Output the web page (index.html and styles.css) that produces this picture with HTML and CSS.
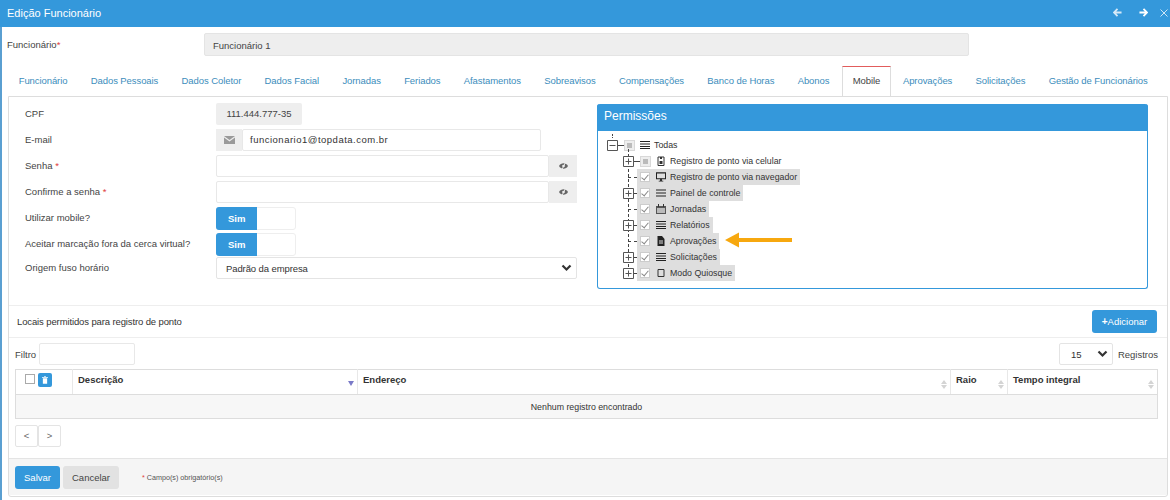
FILE: index.html
```html
<!DOCTYPE html>
<html lang="pt-BR">
<head>
  <meta charset="UTF-8">
  <title>Edição Funcionário</title>
  <link rel="stylesheet" href="styles.css">
</head>
<body>
  <div class="window">
    <header class="title-bar">
      <h1>Edição Funcionário</h1>
      <div class="title-actions">
        <svg width="9" height="9" viewBox="0 0 10 10"><path d="M5 1 1 5l4 4M1.500 5H9.500" fill="none" stroke="#d6e9f7" stroke-width="2"/></svg>
        <svg class="next" width="9" height="9" viewBox="0 0 10 10"><path d="M5 1l4 4-4 4M8.500 5H.5" fill="none" stroke="#fff" stroke-width="2"/></svg>
        <svg class="close" width="8" height="8" viewBox="0 0 8 8"><path d="M.5.5l7 7M7.500.5l-7 7" fill="none" stroke="#cfe6f6" stroke-width="1"/></svg>
      </div>
    </header>

    <div class="employee-row">
      <label>Funcionário<span class="req">*</span></label>
      <div class="employee-field">Funcionário 1</div>
    </div>

    <nav class="tabs">
      <a>Funcionário</a>
      <a>Dados Pessoais</a>
      <a>Dados Coletor</a>
      <a>Dados Facial</a>
      <a>Jornadas</a>
      <a>Feriados</a>
      <a>Afastamentos</a>
      <a>Sobreavisos</a>
      <a>Compensações</a>
      <a>Banco de Horas</a>
      <a>Abonos</a>
      <a class="active">Mobile</a>
      <a>Aprovações</a>
      <a>Solicitações</a>
      <a>Gestão de Funcionários</a>
    </nav>

    <section class="tab-panel">
      <div class="columns">
        <div class="form">
          <div class="form-row">
            <label>CPF</label>
            <div class="readonly">111.444.777-35</div>
          </div>
          <div class="form-row">
            <label>E-mail</label>
            <div class="group email">
              <span class="addon">
                <svg width="11" height="8" viewBox="0 0 11 8"><path d="M0 0h11L5.500 4zM0 1.500v6.500h11V1.500L5.500 5.500z" fill="#9a9a9a"/></svg>
              </span>
              <div class="input">funcionario1@topdata.com.br</div>
            </div>
          </div>
          <div class="form-row">
            <label>Senha <span class="req">*</span></label>
            <div class="group wide">
              <div class="input"></div>
              <span class="addon">
                <svg width="9" height="8" viewBox="0 0 10 8"><path d="M0 4c2-4 8-4 10 0-2 4-8 4-10 0z" fill="#666"/><circle cx="5" cy="4" r="1.500" fill="#eee"/><path d="M7 .5 3.500 7.500" stroke="#eee"/></svg>
              </span>
            </div>
          </div>
          <div class="form-row">
            <label>Confirme a senha <span class="req">*</span></label>
            <div class="group wide">
              <div class="input"></div>
              <span class="addon">
                <svg width="9" height="8" viewBox="0 0 10 8"><path d="M0 4c2-4 8-4 10 0-2 4-8 4-10 0z" fill="#666"/><circle cx="5" cy="4" r="1.500" fill="#eee"/><path d="M7 .5 3.500 7.500" stroke="#eee"/></svg>
              </span>
            </div>
          </div>
          <div class="form-row">
            <label>Utilizar mobile?</label>
            <div class="switch"><span>Sim</span></div>
          </div>
          <div class="form-row">
            <label>Aceitar marcação fora da cerca virtual?</label>
            <div class="switch"><span>Sim</span></div>
          </div>
          <div class="form-row origin">
            <label>Origem fuso horário</label>
            <div class="select wide-select">
              Padrão da empresa
              <svg width="11" height="8" viewBox="0 0 11 8"><path d="M1.500 1.500 5.500 5.500l4-4" fill="none" stroke="#333" stroke-width="2.200"/></svg>
            </div>
          </div>
        </div>

        <div class="perm-panel">
          <div class="perm-title">Permissões</div>
          <div class="tree">
            <div class="tree-root">
              <svg class="toggle" width="11" height="11" viewBox="0 0 11 11"><path d="M.5.5h10v10H.5zM2.500 5.500h6" fill="#fff" stroke="#555"/></svg>
              <span class="dash"></span>
              <span class="check partial"></span>
              <svg class="ico" width="10" height="8" viewBox="0 0 10 8"><path d="M0 .5h10M0 3h10M0 5.500h10M0 7.500h10" stroke="#222" stroke-width="1.200"/></svg>
              <span class="node">Todas</span>
            </div>
            <div class="tree-children">
              <div class="tree-row">
                <svg class="toggle" width="11" height="11" viewBox="0 0 11 11"><path d="M.5.5h10v10H.5zM2.500 5.500h6M5.500 2.500v6" fill="#fff" stroke="#555"/></svg>
                <span class="dash"></span>
                <span class="check partial"></span>
                <svg class="ico" width="10" height="10" viewBox="0 0 10 10"><path d="M2 1h6v8.500H2z" fill="none" stroke="#333"/><path d="M3.500 5h3v3h-3z" fill="#333"/><path d="M4 1h2v2H4z" fill="#333"/></svg>
                <span class="node">Registro de ponto via celular</span>
              </div>
              <div class="tree-row">
                <span class="dash long"></span>
                <span class="selected">
                  <span class="check on"></span>
                  <svg class="ico" width="10" height="10" viewBox="0 0 11 10"><path d="M.5.5h10v6.500H.5z" fill="none" stroke="#222" stroke-width="1.200"/><path d="M3 9h5v1H3zM4.500 7h2v2h-2z" fill="#222"/></svg>
                  <span class="node">Registro de ponto via navegador</span>
                </span>
              </div>
              <div class="tree-row">
                <svg class="toggle" width="11" height="11" viewBox="0 0 11 11"><path d="M.5.5h10v10H.5zM2.500 5.500h6M5.500 2.500v6" fill="#fff" stroke="#555"/></svg>
                <span class="dash short"></span>
                <span class="selected">
                  <span class="check on"></span>
                  <svg class="ico" width="10" height="8" viewBox="0 0 10 8"><path d="M0 1h10M0 4h10M0 7h10" stroke="#222" stroke-width="1.100"/></svg>
                  <span class="node">Painel de controle</span>
                </span>
              </div>
              <div class="tree-row">
                <span class="dash long"></span>
                <span class="selected">
                  <span class="check on"></span>
                  <svg class="ico" width="10" height="10" viewBox="0 0 10 10"><path d="M0 2h10v8H0z" fill="#555"/><path d="M2 0h1v3H2zM7 0h1v3H7z" fill="#333"/><path d="M1 4h8v5H1z" fill="#bbb"/></svg>
                  <span class="node">Jornadas</span>
                </span>
              </div>
              <div class="tree-row">
                <svg class="toggle" width="11" height="11" viewBox="0 0 11 11"><path d="M.5.5h10v10H.5zM2.500 5.500h6M5.500 2.500v6" fill="#fff" stroke="#555"/></svg>
                <span class="dash short"></span>
                <span class="selected">
                  <span class="check on"></span>
                  <svg class="ico" width="10" height="8" viewBox="0 0 10 8"><path d="M0 .5h10M0 3h10M0 5.500h10M0 7.500h10" stroke="#222" stroke-width="1.200"/></svg>
                  <span class="node">Relatórios</span>
                </span>
              </div>
              <div class="tree-row">
                <span class="dash long"></span>
                <span class="selected">
                  <span class="check on"></span>
                  <svg class="ico" width="10" height="10" viewBox="0 0 10 10"><path d="M1.500 0H6l2.500 3v7h-7z" fill="#222"/><path d="M3 5h4M3 7h4" stroke="#ddd"/></svg>
                  <span class="node">Aprovações</span>
                </span>
              </div>
              <div class="tree-row">
                <svg class="toggle" width="11" height="11" viewBox="0 0 11 11"><path d="M.5.5h10v10H.5zM2.500 5.500h6M5.500 2.500v6" fill="#fff" stroke="#555"/></svg>
                <span class="dash short"></span>
                <span class="selected">
                  <span class="check on"></span>
                  <svg class="ico" width="10" height="8" viewBox="0 0 10 8"><path d="M0 .5h10M0 3h10M0 5.500h10M0 7.500h10" stroke="#222" stroke-width="1.200"/></svg>
                  <span class="node">Solicitações</span>
                </span>
              </div>
              <div class="tree-row">
                <svg class="toggle" width="11" height="11" viewBox="0 0 11 11"><path d="M.5.5h10v10H.5zM2.500 5.500h6M5.500 2.500v6" fill="#fff" stroke="#555"/></svg>
                <span class="dash short"></span>
                <span class="selected">
                  <span class="check on"></span>
                  <svg class="ico" width="10" height="10" viewBox="0 0 10 10"><path d="M2 1.500h6v7H2z" fill="none" stroke="#333"/></svg>
                  <span class="node">Modo Quiosque</span>
                </span>
              </div>
            </div>
            <svg class="arrow" width="68" height="16" viewBox="0 0 68 16"><path d="M0 8 14 0.500v5.500h53v4H14v5.500z" fill="#f7a80f"/></svg>
          </div>
        </div>
      </div>

      <div class="places-head">
        <span>Locais permitidos para registro de ponto</span>
        <button class="btn primary add"><b>+</b>Adicionar</button>
      </div>

      <div class="list-tools">
        <div class="filter">Filtro <div class="input filter-input"></div></div>
        <div class="page-size">
          <div class="select size-select">
            15
            <svg width="11" height="8" viewBox="0 0 11 8"><path d="M1.500 1.500 5.500 5.500l4-4" fill="none" stroke="#333" stroke-width="2.200"/></svg>
          </div>
          Registros
        </div>
      </div>

      <table class="grid">
        <thead>
          <tr>
            <th class="col-check">
              <span class="check-box"></span>
              <span class="trash">
                <svg width="6" height="8" viewBox="0 0 7 9"><path d="M0 1h7v1H0zM2.500 0h2v1h-2zM1 2.500h5V9H1z" fill="#fff"/></svg>
              </span>
            </th>
            <th class="col-desc">Descrição<i class="sort-down"></i></th>
            <th class="col-addr">Endereço<i class="sort"></i></th>
            <th class="col-radius">Raio<i class="sort"></i></th>
            <th class="col-full">Tempo integral<i class="sort"></i></th>
          </tr>
        </thead>
        <tbody>
          <tr><td colspan="5">Nenhum registro encontrado</td></tr>
        </tbody>
      </table>

      <div class="pager"><span>&lt;</span><span>&gt;</span></div>

      <footer class="actions">
        <button class="btn primary save">Salvar</button>
        <button class="btn cancel">Cancelar</button>
        <span class="note"><span class="req">*</span> Campo(s) obrigatório(s)</span>
      </footer>
    </section>
  </div>
</body>
</html>
```

FILE: styles.css
```css
* {
  box-sizing: border-box;
}
html,
body {
  margin: 0;
  height: 100%;
  background: #fff;
}
body {
  font-family: "Liberation Sans", Arial, sans-serif;
  font-size: 9.5px;
  color: #444;
  overflow: hidden;
}

.window {
  height: 500px;
  border-left: 2px solid #5a9fd1;
}
.req {
  color: #e04040;
}

/* title */
.title-bar {
  height: 27px;
  margin-left: -2px;
  padding: 0 2px 2px 7px;
  background: #3498db;
  display: flex;
  align-items: center;
  justify-content: space-between;
}
.title-bar h1 {
  margin: 0;
  font-size: 11px;
  font-weight: normal;
  color: #fff;
}
.title-actions {
  display: flex;
  align-items: center;
}
.title-actions .next {
  margin-left: 17px;
}
.title-actions .close {
  margin-left: 12px;
}

.employee-row {
  height: 30px;
  padding: 6px 201px 0 5px;
  display: flex;
  align-items: flex-start;
}
.employee-row label {
  width: 197px;
  line-height: 23px;
}
.employee-field {
  flex: 1;
  height: 23px;
  line-height: 23px;
  padding-left: 8px;
  background: #eee;
  border: 1px solid #e4e4e4;
  border-radius: 2px;
}

/* tabs */
.tabs {
  height: 39px;
  padding: 9px 0 0 5px;
  display: flex;
}
.tabs a {
  padding: 0 11px;
  margin: 0 .67px;
  line-height: 29px;
  color: #3c8dbc;
  white-space: nowrap;
  letter-spacing: -.08px;
}
.tabs .active {
  height: 30px;
  color: #444;
  background: #fff;
  border: 1px solid #ddd;
  border-top: 1px solid #e25c5c;
  border-bottom: 0;
  line-height: 28px;
  position: relative;
  z-index: 1;
  padding: 0 10px;
  margin-right: 0;
}

.tab-panel {
  margin: 0 2px 0 6px;
  height: 401px;
  border: 1px solid #ddd;
  border-radius: 0 0 3px 3px;
}
.columns {
  height: 209px;
  display: flex;
  border-bottom: 1px solid #eee;
}

/* left form */
.form {
  width: 588px;
  padding: 6px 0 0 16px;
}
.form-row {
  height: 26px;
  display: flex;
  align-items: flex-start;
}
.form-row.origin {
  height: 22px;
  margin-top: -2px;
}
.form-row label {
  width: 191px;
  line-height: 22px;
}
.readonly {
  width: 86px;
  height: 22px;
  line-height: 22px;
  text-align: center;
  background: #eee;
  border-radius: 2px;
}
.group {
  display: flex;
  height: 22px;
}
.email {
  width: 325px;
}
.wide {
  width: 361px;
}
.addon {
  width: 28px;
  flex: none;
  background: #eee;
  display: flex;
  align-items: center;
  justify-content: center;
}
.email .addon {
  width: 26px;
}
.input {
  flex: 1;
  height: 22px;
  line-height: 20px;
  padding-left: 7px;
  color: #333;
  background: #fff;
  border: 1px solid #e8e8e8;
  border-radius: 2px;
}
.email .input {
  letter-spacing: .5px;
}
.switch {
  width: 80px;
  height: 23px;
  border: 1px solid #eee;
  border-radius: 3px;
}
.switch span {
  display: block;
  width: 41px;
  height: 23px;
  margin: -1px 0 0 -1px;
  line-height: 23px;
  padding-left: 12px;
  font-weight: bold;
  color: #fff;
  background: #3498db;
  border-radius: 3px 0 0 3px;
}
.select {
  height: 22px;
  display: flex;
  align-items: center;
  justify-content: space-between;
  padding: 0 4px 0 9px;
  color: #333;
  background: #fff;
  border: 1px solid #e4e4e4;
  border-radius: 2px;
}
.wide-select {
  width: 361px;
  letter-spacing: -.1px;
}

/* permissions */
.perm-panel {
  width: 551px;
  height: 185px;
  margin-top: 7px;
  border: 1px solid #3498db;
  border-top: 0;
  border-radius: 3px;
}
.perm-title {
  height: 27px;
  margin: 0 -1px;
  padding-left: 7px;
  line-height: 25px;
  font-size: 12px;
  color: #fff;
  background: #3498db;
  border-radius: 3px 3px 0 0;
}
.tree {
  position: relative;
  padding: 6px 0 0 9px;
  color: #333;
  font-size: 8.800px;
}
.tree-root,
.tree-row {
  height: 16px;
  display: flex;
  align-items: center;
}
.tree-root::before {
  content: "";
  position: absolute;
  left: 14px;
  top: 3px;
  height: 4px;
  border-left: 1px dotted #444;
}
.tree-children {
  position: relative;
  padding-left: 16px;
}
.tree-children::before {
  content: "";
  position: absolute;
  left: 21px;
  top: -4px;
  height: 118px;
  border-left: 1px dashed #444;
}
.toggle {
  flex: none;
  position: relative;
}
.dash {
  width: 6px;
  flex: none;
  border-top: 1px dashed #444;
}
.dash.short {
  width: 3px;
}
.dash.long {
  width: 9px;
  margin-left: 5px;
}
.check {
  width: 10px;
  height: 10px;
  flex: none;
  display: inline-block;
  background: #fff;
  border: 1px solid #ddd;
}
.check.partial {
  width: 11px;
  height: 11px;
  background: #bbb;
  border-color: #d8d8d8;
  box-shadow: inset 0 0 0 2px #eee;
  margin-right: -1px;
}
.check.on {
  position: relative;
  border-color: #ccc;
}
.check.on::after {
  content: "";
  position: absolute;
  left: 2px;
  top: 0;
  width: 3px;
  height: 6px;
  border: solid #888;
  border-width: 0 1px 1px 0;
  transform: rotate(40deg);
}
.tree .ico {
  flex: none;
  margin: 0 4px 0 6px;
}
.selected {
  height: 16px;
  display: flex;
  align-items: center;
  padding: 0 3px;
  background: #dedede;
}
.arrow {
  position: absolute;
  left: 127px;
  top: 101px;
}

/* places */
.places-head {
  height: 32px;
  display: flex;
  align-items: center;
  justify-content: space-between;
  padding: 0 10px 0 8px;
  border-bottom: 1px solid #eee;
  color: #333;
  letter-spacing: -.12px;
}
.btn {
  height: 23px;
  border: 0;
  border-radius: 3px;
  font-family: inherit;
  font-size: 9.5px;
}
.primary {
  background: #3498db;
  color: #fff;
}
.add {
  width: 65px;
  padding: 0;
  letter-spacing: 0;
}
.add b {
  font-size: 10px;
}
.list-tools {
  height: 31px;
  padding: 5px 9px 0 6px;
  display: flex;
  justify-content: space-between;
}
.filter,
.page-size {
  display: flex;
  align-items: center;
  height: 22px;
}
.filter-input {
  width: 96px;
  flex: none;
  margin-left: 3px;
}
.size-select {
  width: 54px;
  margin-right: 5px;
  padding: 0 4px 0 11px;
}

/* table */
.grid {
  width: 1143px;
  margin-left: 6px;
  border-collapse: collapse;
  table-layout: fixed;
  border: 1px solid #ddd;
}
.grid th {
  position: relative;
  height: 25px;
  padding: 0 0 6px 5px;
  text-align: left;
  font-size: 9.5px;
  color: #333;
  border-bottom: 1px solid #ddd;
  border-left: 1px solid #e8e8e8;
}
.grid th:first-child {
  border-left: 0;
}
.col-check {
  width: 57px;
}
.col-desc {
  width: 285px;
}
.col-addr {
  width: 593px;
}
.col-radius {
  width: 57px;
}
.grid .col-check {
  padding: 0 0 5px 9px;
}
.check-box {
  display: inline-block;
  width: 10px;
  height: 10px;
  vertical-align: -2px;
  border: 1px solid #aaa;
}
.trash {
  display: inline-flex;
  width: 14px;
  height: 14px;
  align-items: center;
  justify-content: center;
  vertical-align: middle;
  background: #3498db;
  border-radius: 2px;
}
.sort,
.sort-down {
  position: absolute;
  right: 3px;
  top: 7px;
  width: 0;
  border: 3px solid transparent;
}
.sort {
  height: 0;
  border-bottom: 4px solid #d4d4d4;
}
.sort::after {
  content: "";
  position: absolute;
  left: -3px;
  top: 5px;
  border: 3px solid transparent;
  border-top: 4px solid #d4d4d4;
}
.sort-down {
  top: 11px;
  border-top: 5px solid #7a7ac8;
}
.grid td {
  height: 24px;
  text-align: center;
  background: #f7f7f7;
  color: #333;
  font-size: 8.800px;
}
.pager {
  margin: 6px 0 0 6px;
  display: flex;
}
.pager span {
  width: 23px;
  height: 22px;
  line-height: 20px;
  text-align: center;
  color: #666;
  border: 1px solid #e4e4e4;
  border-radius: 2px;
}
.actions {
  height: 37px;
  margin-top: 11px;
  padding: 7px 6px 0;
  display: flex;
  align-items: flex-start;
  background: #f5f5f5;
  border-top: 1px solid #e4e4e4;
}
.save {
  width: 45px;
}
.cancel {
  width: 56px;
  margin-left: 3px;
  color: #444;
  background: #e2e2e2;
}
.note {
  margin-left: 23px;
  line-height: 23px;
  font-size: 7.200px;
  color: #555;
}
```
